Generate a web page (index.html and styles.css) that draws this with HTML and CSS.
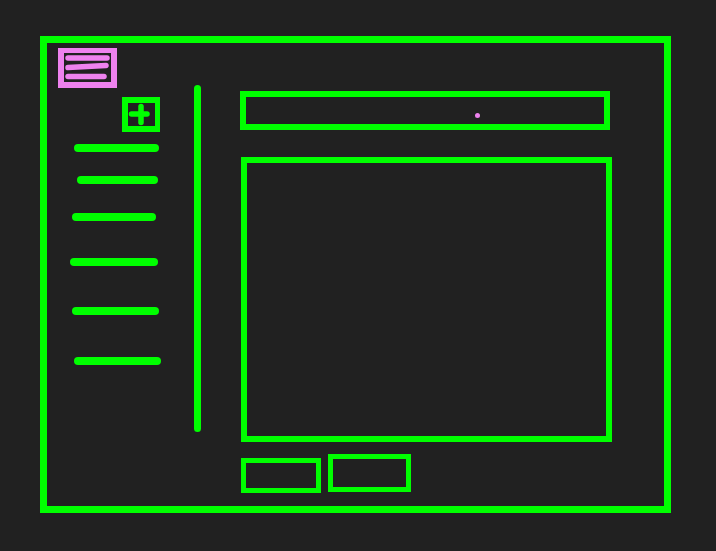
FILE: index.html
```html
<!DOCTYPE html>
<html lang="en">
    <head>
        <meta charset="UTF-8">
        <title>Wireframe</title>
        <link rel="stylesheet" href="styles.css">
    </head>
    <body>
        <div id="frame">
            <div id="sidebar">
                <button class="menu-btn" aria-label="Menu">
                    <svg width="47" height="29" viewBox="0 0 47 29">
                        <line x1="4" y1="5" x2="43" y2="5" />
                        <line x1="4" y1="14.5" x2="42" y2="12.5" />
                        <line x1="4" y1="23.5" x2="40" y2="23.5" />
                    </svg>
                </button>
                <button class="add-btn" aria-label="Add">
                    <svg width="27" height="23" viewBox="0 0 27 23">
                        <line x1="3.5" y1="11" x2="19" y2="11" />
                        <line x1="13" y1="3.5" x2="13" y2="19.5" />
                    </svg>
                </button>
                <div class="nav-lines">
                    <div class="nav-line"></div>
                    <div class="nav-line"></div>
                    <div class="nav-line"></div>
                    <div class="nav-line"></div>
                    <div class="nav-line"></div>
                    <div class="nav-line"></div>
                </div>
            </div>

            <div class="divider"></div>

            <div id="main">
                <div class="input-bar"><span class="caret"></span></div>
                <div class="content-box"></div>
                <div class="btn-row">
                    <div class="btn btn-a"></div>
                    <div class="btn btn-b"></div>
                </div>
            </div>
        </div>
    </body>
</html>
```

FILE: styles.css
```css
body {
    margin: 0;
    padding: 0;
    background-color: #212121;
    width: 716px;
    height: 551px;
    overflow: hidden;
}

#frame {
    box-sizing: border-box;
    margin-top: 36px;
    margin-left: 40px;
    width: 631px;
    height: 477px;
    border: 7px solid #00ff00;
    display: flex;
    align-items: flex-start;
}

#sidebar {
    box-sizing: border-box;
    width: 147px;
    padding-top: 5px;
    display: flex;
    flex-direction: column;
    align-items: flex-start;
}

.menu-btn {
    margin: 0 0 0 11px;
    padding: 0;
    width: 59px;
    height: 40px;
    box-sizing: border-box;
    border: 6px solid #ee82ee;
    border-top-width: 5px;
    background: transparent;
    display: flex;
}

.menu-btn svg line {
    stroke: #ee82ee;
    stroke-width: 5.5;
    stroke-linecap: round;
}

.add-btn {
    margin: 9px 0 0 75px;
    padding: 0;
    width: 38px;
    height: 35px;
    box-sizing: border-box;
    border: 6px solid #00ff00;
    border-right-width: 5px;
    background: transparent;
    display: flex;
}

.add-btn svg line {
    stroke: #00ff00;
    stroke-width: 5.5;
    stroke-linecap: round;
}

.nav-lines {
    display: flex;
    flex-direction: column;
    margin-top: 12px;
}

.nav-line {
    height: 8px;
    border-radius: 4px;
    background: #00ff00;
}

.nav-line:nth-child(1) { margin-left: 27px; width: 85px; }
.nav-line:nth-child(2) { margin-left: 30px; width: 81px; margin-top: 24px; }
.nav-line:nth-child(3) { margin-left: 25px; width: 84px; margin-top: 29px; }
.nav-line:nth-child(4) { margin-left: 23px; width: 88px; margin-top: 37px; }
.nav-line:nth-child(5) { margin-left: 25px; width: 87px; margin-top: 41px; }
.nav-line:nth-child(6) { margin-left: 27px; width: 87px; margin-top: 42px; }

.divider {
    width: 7px;
    height: 347px;
    margin-top: 42px;
    border-radius: 4px;
    background: #00ff00;
}

#main {
    display: flex;
    flex-direction: column;
    align-items: flex-start;
    padding-left: 39px;
    padding-top: 48px;
}

.input-bar {
    box-sizing: border-box;
    width: 370px;
    height: 39px;
    border: 6px solid #00ff00;
    padding: 16px 0 0 229px;
}

.caret {
    display: block;
    width: 5px;
    height: 5px;
    border-radius: 50%;
    background: #ee82ee;
}

.content-box {
    box-sizing: border-box;
    width: 371px;
    height: 285px;
    margin: 27px 0 0 1px;
    border: 6px solid #00ff00;
}

.btn-row {
    display: flex;
    align-items: flex-start;
    gap: 7px;
    margin: 12px 0 0 1px;
}

.btn {
    box-sizing: border-box;
    border: 5px solid #00ff00;
}

.btn-a {
    width: 80px;
    height: 35px;
    margin-top: 4px;
}

.btn-b {
    width: 83px;
    height: 38px;
}
```
